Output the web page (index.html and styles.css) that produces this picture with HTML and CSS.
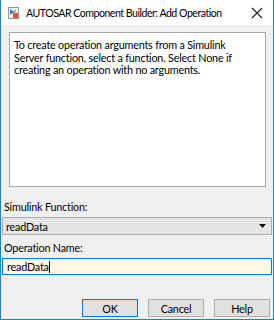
FILE: index.html
```html
<!DOCTYPE html>
<html>
<head>
<meta charset="utf-8">
<link rel="stylesheet" href="styles.css">
</head>
<body>
<div class="window">
  <div class="titlebar">
    <svg class="app-icon" width="11" height="12" viewBox="0 0 11 12">
      <rect x="0.5" y="0.5" width="10" height="11" fill="#f4f6f8" stroke="#8a9aa8"/>
      <path d="M2 2 L6 5 L2 8 Z" fill="#2a7bc4"/>
      <rect x="5" y="6" width="5" height="5" fill="#d9591b"/>
      <path d="M6 6 L6 4 L8 4" fill="none" stroke="#555" stroke-width="0.8"/>
    </svg>
    <span class="title">AUTOSAR Component Builder: Add Operation</span>
    <svg class="close" width="12" height="12" viewBox="0 0 12 12">
      <path d="M1 1 L11 11 M11 1 L1 11" stroke="#222" stroke-width="1.1"/>
    </svg>
  </div>
  <div class="content">
    <div class="desc">To create operation arguments from a Simulink Server function, select a function. Select None if creating an operation with no arguments.</div>
    <div class="label">Simulink Function:</div>
    <div class="select">
      <span>readData</span>
      <svg class="arrow" width="7" height="4" viewBox="0 0 7 4"><path d="M0 0 L7 0 L3.5 4 Z" fill="#111"/></svg>
    </div>
    <div class="label second">Operation Name:</div>
    <div class="field"><span>readData</span><span class="caret"></span></div>
    <div class="buttons">
      <div class="btn default">OK</div>
      <div class="btn">Cancel</div>
      <div class="btn">Help</div>
    </div>
  </div>
</div>
</body>
</html>
```
FILE: styles.css
```css
html, body {
  margin: 0;
  padding: 0;
  background: #ffffff;
}
body {
  font-family: Lato, "Noto Sans", sans-serif;
  font-size: 10.8px;
  letter-spacing: -0.2px;
  color: #000;
}
.window {
  width: 274px;
  height: 320px;
  box-sizing: border-box;
  border: 1px solid #1883d7;
  border-top: none;
  display: flex;
  flex-direction: column;
  background: #f0f0f0;
}
.titlebar {
  height: 25px;
  flex: none;
  background: #ffffff;
  display: flex;
  align-items: center;
  padding-left: 7px;
  padding-right: 10px;
}
.app-icon {
  flex: none;
  margin-right: 7px;
}
.title {
  flex: 1;
  font-size: 10.6px;
  letter-spacing: -0.5px;
  white-space: nowrap;
}
.close {
  flex: none;
}
.content {
  flex: 1;
  display: flex;
  flex-direction: column;
  padding: 7px 1px 0 1px;
}
.desc {
  margin: 0 6px 0 7px;
  height: 155px;
  box-sizing: border-box;
  background: #ffffff;
  border: 1px solid #a8a8a8;
  padding: 6px 12px 5px 4px;
  line-height: 12.5px;
}
.label {
  margin: 10px 0 0 2px;
  height: 20px;
  line-height: 20px;
}
.label.second {
  margin-top: 3px;
}
.select {
  height: 18px;
  box-sizing: border-box;
  background: #e5e5e5;
  border: 1px solid #acacac;
  display: flex;
  align-items: center;
  justify-content: space-between;
  padding: 0 5px 0 3px;
}
.field {
  height: 17px;
  box-sizing: border-box;
  background: #fff6e3;
  border: 1px solid #0078d7;
  display: flex;
  align-items: center;
  padding-left: 4px;
}
.caret {
  width: 1px;
  height: 12px;
  background: #000;
}
.buttons {
  display: flex;
  justify-content: flex-end;
  gap: 10px;
  margin-top: 24px;
  padding-right: 2px;
}
.btn {
  width: 56px;
  height: 18px;
  box-sizing: border-box;
  background: #e1e1e1;
  border: 1px solid #adadad;
  display: flex;
  align-items: center;
  justify-content: center;
}
.btn.default {
  border: 1px solid #0078d7;
}
```
